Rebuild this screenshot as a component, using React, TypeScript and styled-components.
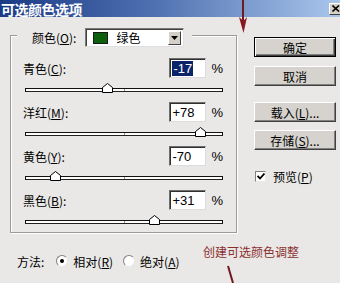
import styled, { createGlobalStyle } from 'styled-components';

const GlobalStyle = createGlobalStyle`
  body {
    margin: 0;
    background: #e9e8e6;
  }
`;

const FONT = `"Liberation Sans", "Noto Sans CJK SC", sans-serif`;

const Window = styled.div`
  position: relative;
  width: 340px;
  height: 283px;
  overflow: hidden;
  background: #e9e8e6;
  font-family: ${FONT};
  font-size: 12px;
  color: #000;
`;

const TitleBar = styled.div`
  display: flex;
  align-items: center;
  justify-content: space-between;
  height: 17px;
  padding-left: 1px;
  background: linear-gradient(to right, #1b3a86, #4f70b0 45%, #a9c6ec);
  color: #fff;
  font-weight: bold;
  font-size: 14px;
  font-family: "Noto Sans CJK SC", sans-serif;
  letter-spacing: -0.5px;
`;

const CloseButton = styled.div`
  display: flex;
  align-items: center;
  justify-content: center;
  width: 13px;
  height: 12px;
  margin-right: -2px;
  background: #d4d0c8;
  border: 1px solid;
  border-color: #fff #404040 #404040 #fff;
  box-sizing: border-box;
`;

const Body = styled.div`
  display: flex;
  padding: 18px 0 0 10px;
`;

const LeftColumn = styled.div`
  display: flex;
  flex-direction: column;
  width: 227px;
`;

const GroupBox = styled.div`
  position: relative;
  border: 1px solid #9a9a9a;
  box-shadow: 1px 1px 0 #fff, inset 1px 1px 0 #fff;
  padding: 22px 13px 8px 12px;
  height: 198px;
  box-sizing: border-box;
  display: flex;
  flex-direction: column;
  gap: 10px;
`;

const Legend = styled.div`
  position: absolute;
  left: 6px;
  top: -8px;
  height: 19px;
  display: flex;
  align-items: center;
  gap: 9px;
  padding: 0 8px 0 15px;
  background: #e9e8e6;
`;

const Mnemonic = styled.span`
  text-decoration: underline;
  text-underline-offset: 1px;
`;

const Dropdown = styled.div`
  display: flex;
  align-items: center;
  width: 99px;
  height: 19px;
  box-sizing: border-box;
  background: #fff;
  border: 1px solid;
  border-color: #7a7a7a #e0e0e0 #e0e0e0 #7a7a7a;
  box-shadow: inset 1px 1px 0 #404040;
  padding: 0 2px 0 7px;
  gap: 8px;
`;

const Swatch = styled.div<{ $color: string }>`
  width: 15px;
  height: 12px;
  background: ${(p) => p.$color};
  border: 1px solid #1a1a1a;
  box-sizing: border-box;
`;

const DropText = styled.span`
  flex: 1;
  font-family: "Noto Sans CJK SC", sans-serif;
`;

const DropArrow = styled.div`
  display: flex;
  align-items: center;
  justify-content: center;
  width: 13px;
  height: 14px;
  background: #d4d0c8;
  border: 1px solid;
  border-color: #fff #404040 #404040 #fff;
  box-sizing: border-box;
`;

const Row = styled.div`
  display: flex;
  flex-direction: column;
  gap: 10px;
`;

const InputLine = styled.div`
  display: flex;
  align-items: center;
  justify-content: space-between;
  height: 20px;
`;

const Label = styled.span`
  font-family: "Noto Sans CJK SC", sans-serif;
`;

const ValueGroup = styled.div`
  display: flex;
  align-items: center;
  gap: 5px;
  margin-right: 0;
`;

const ValueBox = styled.div`
  display: flex;
  align-items: center;
  width: 37px;
  height: 20px;
  box-sizing: border-box;
  background: #fff;
  border: 1px solid;
  border-color: #6e6e6e #dcdcdc #dcdcdc #6e6e6e;
  box-shadow: inset 1px 1px 0 #303030;
  padding-left: 2px;
  font-size: 13px;
`;

const Selected = styled.span`
  background: #0a246a;
  color: #fff;
  padding: 0 1px;
`;

const Percent = styled.span`
  font-size: 13px;
`;

const Track = styled.div`
  position: relative;
  height: 4px;
  margin: 0 0 0 2px;
  box-sizing: border-box;
  background: #fff;
  border: 1px solid #111;
  border-bottom-color: #222;
`;

const Tick = styled.div`
  position: absolute;
  left: 50%;
  top: 0;
  width: 1px;
  height: 2px;
  background: #909090;
`;

const Thumb = styled.svg`
  position: absolute;
  top: -6px;
  margin-left: -5px;
`;

const MethodRow = styled.div`
  display: flex;
  align-items: center;
  height: 16px;
  margin-top: 20px;
  padding-left: 7px;
  font-family: "Noto Sans CJK SC", sans-serif;
`;

const Radio = styled.span<{ $checked?: boolean }>`
  display: inline-flex;
  align-items: center;
  justify-content: center;
  width: 12px;
  height: 12px;
  box-sizing: border-box;
  border-radius: 50%;
  background: #fff;
  border: 1px solid;
  border-color: #808080 #e8e8e8 #e8e8e8 #808080;
  margin: 0 5px 0 ${(p) => (p.$checked ? '12px' : '10px')};

  &::after {
    content: '';
    width: 4px;
    height: 4px;
    border-radius: 50%;
    background: ${(p) => (p.$checked ? '#000' : 'transparent')};
  }
`;

const RightColumn = styled.div`
  display: flex;
  flex-direction: column;
  width: 82px;
  margin-left: 17px;
  padding-top: 2px;
`;

const Button = styled.div<{ $default?: boolean; $gap: number }>`
  display: flex;
  align-items: center;
  justify-content: center;
  height: 20px;
  margin-top: ${(p) => p.$gap}px;
  box-sizing: border-box;
  background: #d6d3ce;
  border: 1px solid;
  border-color: ${(p) => (p.$default ? '#000' : '#fff #404040 #404040 #fff')};
  box-shadow: ${(p) =>
    p.$default
      ? 'inset 1px 1px 0 #fff, inset -1px -1px 0 #404040, inset -2px -2px 0 #808080'
      : 'inset -1px -1px 0 #808080'};
  font-family: "Noto Sans CJK SC", sans-serif;
  font-size: 12px;
`;

const CheckRow = styled.div`
  display: flex;
  align-items: center;
  gap: 7px;
  margin-top: 18px;
  padding-left: 1px;
  font-family: "Noto Sans CJK SC", sans-serif;
`;

const CheckBox = styled.div`
  display: flex;
  align-items: center;
  justify-content: center;
  width: 11px;
  height: 11px;
  box-sizing: border-box;
  background: #fff;
  border: 1px solid;
  border-color: #808080 #e8e8e8 #e8e8e8 #808080;
`;

const Note = styled.div`
  position: absolute;
  left: 203px;
  top: 243px;
  color: #8a2f2f;
  font-family: "Noto Sans CJK SC", sans-serif;
  font-size: 12px;
`;

const Annotation = styled.svg`
  position: absolute;
  left: 0;
  top: 0;
  pointer-events: none;
`;

type SliderRow = {
  name: string;
  key: string;
  value: number;
  selected?: boolean;
};

const rows: SliderRow[] = [
  { name: '青色', key: 'C', value: -17, selected: true },
  { name: '洋红', key: 'M', value: 78 },
  { name: '黄色', key: 'Y', value: -70 },
  { name: '黑色', key: 'B', value: 31 },
];

const fmt = (v: number) => (v > 0 ? `+${v}` : `${v}`);

const App = () => {
  return (
    <Window>
      <GlobalStyle />
      <TitleBar>
        <span>可选颜色选项</span>
        <CloseButton>
          <svg width="8" height="7" viewBox="0 0 8 7">
            <path d="M0.5 0.5 L7 6.5 M7 0.5 L0.5 6.5" stroke="#000" strokeWidth="1.6" />
          </svg>
        </CloseButton>
      </TitleBar>
      <Body>
        <LeftColumn>
          <GroupBox>
            <Legend>
              <Label>
                颜色(<Mnemonic>O</Mnemonic>):
              </Label>
              <Dropdown>
                <Swatch $color="#0d5e0d" />
                <DropText>绿色</DropText>
                <DropArrow>
                  <svg width="7" height="4" viewBox="0 0 7 4">
                    <path d="M0 0 H7 L3.5 4 Z" fill="#000" />
                  </svg>
                </DropArrow>
              </Dropdown>
            </Legend>
            {rows.map((r) => (
              <Row key={r.key}>
                <InputLine>
                  <Label>
                    {r.name}(<Mnemonic>{r.key}</Mnemonic>):
                  </Label>
                  <ValueGroup>
                    <ValueBox>
                      {r.selected ? <Selected>{fmt(r.value)}</Selected> : fmt(r.value)}
                    </ValueBox>
                    <Percent>%</Percent>
                  </ValueGroup>
                </InputLine>
                <Track>
                  <Tick />
                  <Thumb
                    width="11"
                    height="10"
                    viewBox="0 0 11 10"
                    style={{ left: `${((r.value + 100) / 200) * 100}%` }}
                  >
                    <path d="M0.5 4.5 L5.5 0.5 L10.5 4.5 V9.5 H0.5 Z" fill="#fff" stroke="#000" />
                  </Thumb>
                </Track>
              </Row>
            ))}
          </GroupBox>
          <MethodRow>
            <span>方法:</span>
            <Radio $checked />
            <span>
              相对(<Mnemonic>R</Mnemonic>)
            </span>
            <Radio />
            <span>
              绝对(<Mnemonic>A</Mnemonic>)
            </span>
          </MethodRow>
        </LeftColumn>
        <RightColumn>
          <Button $default $gap={0}>确定</Button>
          <Button $gap={9}>取消</Button>
          <Button $gap={16}>
            载入(<Mnemonic>L</Mnemonic>)...
          </Button>
          <Button $gap={8}>
            存储(<Mnemonic>S</Mnemonic>)...
          </Button>
          <CheckRow>
            <CheckBox>
              <svg width="8" height="7" viewBox="0 0 8 7">
                <path d="M0.5 3 L3 5.5 L7.5 0.5" stroke="#000" strokeWidth="1.8" fill="none" />
              </svg>
            </CheckBox>
            <span>
              预览(<Mnemonic>P</Mnemonic>)
            </span>
          </CheckRow>
        </RightColumn>
      </Body>
      <Note>创建可选颜色调整</Note>
      <Annotation width="340" height="283" viewBox="0 0 340 283">
        <path d="M243 0 V22" stroke="#6e1a1f" strokeWidth="2" />
        <path d="M239 17 L243.5 33 L247 17 L243.5 21 Z" fill="#8a1620" />
        <path d="M228 266 L233 283" stroke="#6e1a1f" strokeWidth="2" />
      </Annotation>
    </Window>
  );
};

export default App;
